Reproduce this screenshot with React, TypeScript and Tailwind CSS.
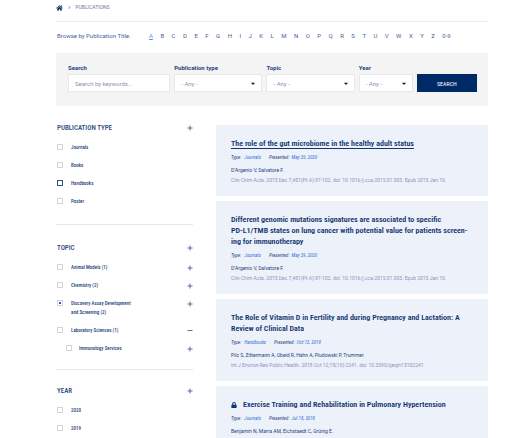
import type { ReactNode } from "react";
import { FaHome, FaLock, FaCaretDown } from "react-icons/fa";

type Option = {
  label: string;
  checked?: boolean;
  active?: boolean;
  nested?: boolean;
  toggle?: "plus" | "minus";
};

type Publication = {
  title: string;
  type: string;
  date: string;
  authors: string;
  citation?: string;
  underlined?: boolean;
  locked?: boolean;
};

const letters = [..."ABCDEFGHIJKLMNOPQRSTUVWXYZ", "0-9"];

const types: Option[] = [
  { label: "Journals" },
  { label: "Books" },
  { label: "Handbooks", active: true },
  { label: "Poster" },
];

const topics: Option[] = [
  { label: "Animal Models (1)", toggle: "plus" },
  { label: "Chemistry (2)", toggle: "plus" },
  { label: "Discovery Assay Development and Screening (2)", checked: true, toggle: "plus" },
  { label: "Laboratory Sciences (1)", toggle: "minus" },
  { label: "Immunology Services", nested: true, toggle: "plus" },
];

const years: Option[] = [{ label: "2020" }, { label: "2019" }];

const publications: Publication[] = [
  {
    title: "The role of the gut microbiome in the healthy adult status",
    type: "Journals",
    date: "May 29, 2020",
    authors: "D’Argenio V, Salvatore F.",
    citation: "Clin Chim Acta. 2015 Dec 7;451(Pt A):97-102. doi: 10.1016/j.cca.2015.01.003. Epub 2015 Jan 10.",
    underlined: true,
  },
  {
    title:
      "Different genomic mutations signatures are associated to specific\nPD-L1/TMB states on lung cancer with potential value for patients screen-\ning for immunotherapy",
    type: "Journals",
    date: "May 29, 2020",
    authors: "D’Argenio V, Salvatore F.",
    citation: "Clin Chim Acta. 2015 Dec 7;451(Pt A):97-102. doi: 10.1016/j.cca.2015.01.003. Epub 2015 Jan 10.",
  },
  {
    title: "The Role of Vitamin D in Fertility and during Pregnancy and Lactation: A\nReview of Clinical Data",
    type: "Handbooks",
    date: "Oct 12, 2018",
    authors: "Pilz S, Zittermann A, Obeid R, Hahn A, Pludowski P, Trummer.",
    citation: "Int J Environ Res Public Health. 2018 Oct 12;15(10):2241. doi: 10.3390/ijerph15102241.",
  },
  {
    title: "Exercise Training and Rehabilitation in Pulmonary Hypertension",
    type: "Journals",
    date: "Jul 18, 2018",
    authors: "Benjamin N, Marra AM, Eichstaedt C, Grünig E.",
    locked: true,
  },
];

const Toggle = ({ label, minus }: { label: string; minus?: boolean }) => (
  <button type="button" aria-label={label} className="flex h-[9px] w-[6px] shrink-0 items-center">
    <svg viewBox="0 0 6 6" className="h-[6px] w-[6px]" stroke="#2f4f86" strokeWidth="0.8" aria-hidden="true">
      <path d={minus ? "M0.5 2.5H5.5" : "M0.5 3H5.5M3 0.5V5.5"} />
    </svg>
  </button>
);

const OptionRow = ({ option }: { option: Option }) => (
  <li className={`flex items-start justify-between ${option.nested ? "pl-[9px]" : ""}`}>
    <label className={`flex items-start ${option.nested ? "gap-[7px]" : "gap-2"}`}>
      <input
        type="checkbox"
        defaultChecked={option.checked}
        className={`mt-px h-[6px] w-[6px] shrink-0 appearance-none border bg-white checked:bg-[#1d5bd0] checked:bg-clip-content checked:p-px ${
          option.active ? "border-[#2f4f86]" : "border-[#d4d4d8]"
        }`}
      />
      <span className="w-[66px] text-[5px] leading-[9px] font-medium">{option.label}</span>
    </label>
    {option.toggle && <Toggle label={`Toggle ${option.label}`} minus={option.toggle === "minus"} />}
  </li>
);

const FilterGroup = ({ title, options, className }: { title: string; options: Option[]; className: string }) => (
  <section className={`pl-px font-['Roboto_Condensed','Liberation_Sans_Narrow','Liberation_Sans',sans-serif] ${className}`}>
    <div className="flex items-center justify-between">
      <h2 className="text-[7px] leading-3 font-medium">{title}</h2>
      <Toggle label={`Toggle ${title}`} />
    </div>
    <ul className="mt-[9px] flex flex-col gap-[9px]">
      {options.map((option) => (
        <OptionRow key={option.label} option={option} />
      ))}
    </ul>
  </section>
);

const Field = ({ id, label, children }: { id: string; label: string; children: ReactNode }) => (
  <div className="min-w-0">
    <label htmlFor={id} className="block text-[6px] leading-3 font-bold">
      {label}
    </label>
    {children}
  </div>
);

const Select = ({ id, label }: { id: string; label: string }) => (
  <Field id={id} label={label}>
    <div className="relative">
      <select
        id={id}
        className="block h-[18px] w-full appearance-none border border-[#e8e8ea] bg-white pl-[6px] text-[6px] text-[#8d8fb5]"
      >
        <option>- Any -</option>
      </select>
      <FaCaretDown className="pointer-events-none absolute top-[6px] right-[6px] h-[7px] w-[6px] text-[#1b1b1b]" />
    </div>
  </Field>
);

const Card = ({ pub }: { pub: Publication }) => (
  <article className="bg-[#edf1fa] px-[15px] pt-[13px] pb-[11px]">
    <div className="font-['Roboto_Condensed','Liberation_Sans_Narrow','Liberation_Sans',sans-serif]">
      <h3 className="flex items-center gap-[6px] text-[8px] leading-[11px] font-semibold whitespace-pre-line text-[#12356f]">
        {pub.locked && <FaLock className="h-[6px] w-[6px] shrink-0" />}
        <a href="#" className={pub.underlined ? "underline decoration-1 underline-offset-2" : ""}>
          {pub.title}
        </a>
      </h3>
      <p className="mt-1 flex gap-2 text-[5px] leading-2 italic">
        <span>
          Type: <a href="#" className="ml-[2px] text-[#2f6fe0]">{pub.type}</a>
        </span>
        <span>
          Presented: <span className="ml-px text-[#2f6fe0]">{pub.date}</span>
        </span>
      </p>
    </div>
    <p className="mt-1 text-[5px] leading-[10px]">{pub.authors}</p>
    <p className="min-h-[10px] text-[5px] leading-[10px] text-[#8f92bd]">{pub.citation}</p>
  </article>
);

export default function App() {
  return (
    <main className="mr-[37px] ml-14 bg-white font-['Roboto',sans-serif] text-[#26457e]">
      <nav aria-label="Breadcrumb" className="flex h-[22px] items-start gap-[5px] border-b border-[#ececee] pt-[3px] text-[5px] leading-[9px]">
        <a href="#" aria-label="Home" className="flex h-[9px] items-center">
          <FaHome className="h-[6px] w-[7px] text-[#12356f]" />
        </a>
        <span className="text-[8px] text-[#2f6fe0]">›</span>
        <span className="text-[#6f74ab]">PUBLICATIONS</span>
      </nav>

      <div className="flex h-[31px] items-center pb-1 pl-px text-[6px] text-[#46619a]">
        <span className="w-[92px] shrink-0">Browse by Publication Title:</span>
        <nav aria-label="Browse by title" className="flex w-[302px] justify-between">
          {letters.map((letter) => (
            <a key={letter} href="#" className={letter === "A" ? "text-[#5b8fe8] underline" : ""}>
              {letter}
            </a>
          ))}
        </nav>
      </div>

      <form className="grid grid-cols-[102fr_88fr_88fr_54fr_60fr] items-end gap-1 bg-[#f4f4f4] pt-[9px] pr-[11px] pb-[14px] pl-3">
        <Field id="search" label="Search">
          <input
            id="search"
            placeholder="Search by keywords..."
            className="block h-[18px] w-full border border-[#e8e8ea] bg-white pl-[6px] text-[6px] placeholder:text-[#8d8fb5]"
          />
        </Field>
        <Select id="type" label="Publication type" />
        <Select id="topic" label="Topic" />
        <Select id="year" label="Year" />
        <button
          type="submit"
          className="h-[18px] bg-[#002a66] font-['Roboto_Condensed','Liberation_Sans_Narrow','Liberation_Sans',sans-serif] text-[6px] text-white"
        >
          SEARCH
        </button>
      </form>

      <div className="mt-4 grid grid-cols-[137fr_272fr] gap-[23px]">
        <aside>
          <FilterGroup title="PUBLICATION TYPE" options={types} className="border-b border-[#e6e6e8] pb-[18px]" />
          <FilterGroup title="TOPIC" options={topics} className="border-b border-[#e6e6e8] pt-[17px] pb-4" />
          <FilterGroup title="YEAR" options={years} className="pt-[15px]" />
        </aside>
        <div className="flex flex-col gap-[5px] pt-[3px]">
          {publications.map((pub) => (
            <Card key={pub.title} pub={pub} />
          ))}
        </div>
      </div>
    </main>
  );
}
